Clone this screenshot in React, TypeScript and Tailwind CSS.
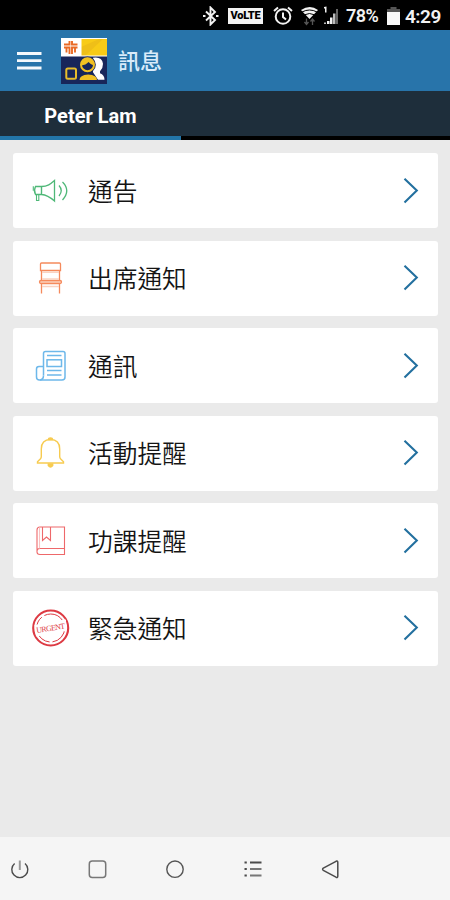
import type { ReactNode } from "react"

interface MessageItem {
  id: string
  label: string
  icon: ReactNode
}

function HornIcon() {
  return (
    <svg viewBox="0 0 40 40" className="size-10" fill="none" stroke="#4fb878" strokeWidth="1.3">
      <path d="M11.500 15.500H5.500q-2 4 0 8h6M11.500 15.500c6 0 9-2.500 13-6V30c-4-3.500-7-6-13-6.500z" />
      <path d="M11.500 15.500v8M3.300 15.300v4.500M6.500 23.500v6h2.300v-6" strokeWidth="1.100" />
      <path d="M29 14.500q4.500 5 0 10.500M32.500 11q8.500 8.500 0 18" />
    </svg>
  )
}

function ChairIcon() {
  return (
    <svg viewBox="0 0 40 40" className="size-10" fill="none" stroke="#f58a5c" strokeWidth="1.300">
      <path d="M10.500 12.500h20V6q0-1-1-1h-18q-1 0-1 1z" />
      <path d="M11.500 12.500V22M29.500 12.500V22" />
      <rect x="9.500" y="22.500" width="22" height="3" rx="1.500" fill="#fbd0bc" />
      <path d="M11.500 25.500v10M29.500 25.500v10" />
      <path d="M12 14.200h17M12 21h17M12 28.500h17" stroke="#fad3c2" strokeWidth="1.500" />
    </svg>
  )
}

function NewsIcon() {
  return (
    <svg viewBox="0 0 40 40" className="size-10" fill="none" stroke="#6db8ea" strokeWidth="1.500">
      <path d="M13.500 29.500v-22q0-2 2-2h17.500q2 0 2 2V31q0 3-3 3H9.500q-3 0-3-3v-8q0-2.500 2.500-2.500h4.500" />
      <path d="M13.500 29.500q0 4-3.500 4.500" />
      <rect x="17" y="13.800" width="14.500" height="6.700" />
      <path d="M17 9.500h14.500M17 24.500h14.500M17 29h14.500" />
    </svg>
  )
}

function BellIcon() {
  return (
    <svg viewBox="0 0 40 40" className="size-10" fill="none" stroke="#f7cb50" strokeWidth="1.400">
      <path d="M7.500 30h26v-1.200l-3-3c-.6-.7-.8-1.300-.8-2.300V16q0-9.300-9.200-9.500-9.200.2-9.200 9.500v7.500c0 1-.2 1.600-.8 2.300l-3 3z" />
      <path d="M18.500 6.500q0-1.500 2-1.500t2 1.500z" fill="#f7cb50" />
      <path d="M18.300 31h4.400v1.500q-2.200 3-4.400 0z" fill="#f7cb50" />
    </svg>
  )
}

function BookIcon() {
  return (
    <svg viewBox="0 0 40 40" className="size-10" fill="none" stroke="#ee686a" strokeWidth="1.100">
      <path d="M34.500 27.500V6H10q-3 0-3 3v22q0 2.500 3 2.500h24.500v-6H10q-3 0-3 2.500" />
      <path d="M9.500 6.500v21" stroke="#f8c3c3" />
      <path d="M12.500 6v13.500l4-3.500 4 3.500V6" />
    </svg>
  )
}

function UrgentIcon() {
  return (
    <svg viewBox="0 0 40 40" className="size-10" fill="none" stroke="#dd3a43">
      <circle cx="20.700" cy="20" r="17.500" strokeWidth="2.100" />
      <circle cx="20.700" cy="20" r="14" strokeWidth="1" strokeDasharray="20 3 17 2 14 3" />
      <path d="M4.500 17L36 11.500V23L6 28.500z" fill="#fff" stroke="none" />
      <text
        x="20.700"
        y="22.800"
        textAnchor="middle"
        textLength="29"
        transform="rotate(-9 20.700 20)"
        className="font-['Liberation_Serif'] text-[8px]"
        fill="#dd3a43"
        stroke="none"
      >
        URGENT
      </text>
    </svg>
  )
}

const items: MessageItem[] = [
  { id: "notice", label: "通告", icon: <HornIcon /> },
  { id: "attendance", label: "出席通知", icon: <ChairIcon /> },
  { id: "newsletter", label: "通訊", icon: <NewsIcon /> },
  { id: "activity", label: "活動提醒", icon: <BellIcon /> },
  { id: "homework", label: "功課提醒", icon: <BookIcon /> },
  { id: "urgent", label: "緊急通知", icon: <UrgentIcon /> },
]

function StatusBar() {
  return (
    <div className="flex h-[30px] items-center bg-black pt-[2px] pl-[202px] text-[#f2f2f2]">
      <svg viewBox="0 0 18 20" className="h-5 w-[18px] shrink-0" fill="none" stroke="currentColor" strokeWidth="1.900">
        <path d="M4 5.500l9 8.500-4.500 4.500V1.500L13 6l-9 8.500" />
        <path d="M1 10h2.500M14 10h2.500" strokeWidth="2.200" />
      </svg>
      <div className="ml-2 flex h-4 w-[35px] shrink-0 items-center justify-center bg-[#f2f2f2] font-['Roboto'] text-[11px] font-black tracking-tight text-black">
        VoLTE
      </div>
      <svg viewBox="0 0 20 20" className="ml-[10px] size-5 shrink-0" fill="none" stroke="currentColor" strokeWidth="2">
        <circle cx="10" cy="10.500" r="7.300" />
        <path d="M1 5l4-3.500M19 5l-4-3.500M10 6.500V11l3 2.500" />
      </svg>
      <svg viewBox="0 0 20 20" className="ml-[7px] size-5 shrink-0">
        <path d="M1 4q9-6 17 0l-8.500 9z" fill="currentColor" />
        <path d="M2 6q7.500-4 15 0M5 8.700q4.500-2.400 9 0" stroke="#000" strokeWidth="1" fill="none" />
        <path d="M6.500 12.500v6M4.500 16l2 2.500 2-2.500M12.500 19v-6M10.500 15.500l2-2.500 2 2.500" stroke="#555" strokeWidth="1.300" fill="none" />
      </svg>
      <svg viewBox="0 0 18 20" className="ml-[2px] h-5 w-[18px] shrink-0" fill="currentColor">
        <path d="M2 1l2.500-.5v6H3V2.500H2zM5 15h2.500v3H5zM8 11.500h2.500V18H8z" />
        <path d="M2 16.500h2V18H2zM11 7.500h2.500V18H11z" fill="#bbb" />
        <path d="M14 3h2v15h-2z" fill="#666" />
      </svg>
      <span className="ml-[6px] w-[41px] shrink-0 font-['Roboto'] text-[18px] leading-none font-semibold tracking-[-0.500px]">78%</span>
      <svg viewBox="0 0 13 20" className="h-5 w-[13px] shrink-0">
        <path d="M3.500 1h6v2H13v4H0V3h3.500z" fill="#555" />
        <path d="M0 6h13v13H0z" fill="#f8f8f8" />
      </svg>
      <span className="ml-[5px] shrink-0 font-['Roboto'] text-[19px] leading-none font-semibold tracking-[-0.500px]">4:29</span>
    </div>
  )
}

function AppLogo() {
  return (
    <svg viewBox="0 0 46 46" className="ml-[19px] size-[46px]">
      <path d="M0 0h46v46H0z" fill="#18265a" />
      <path d="M0 0h20v18H0z" fill="#fff" />
      <path d="M20 1h26v17H20z" fill="#f8cb17" />
      <path d="M20 18V9L38 1h4L24 18z" fill="#efbf18" />
      <path d="M20 1v17M0 18h46M0 .5h46" stroke="#fff" strokeWidth="1" />
      <path d="M3 6.500h5.500V3M16.500 6.500H11V3M3 9.500h5.500v6.500M16.500 9.500H11v6.500M5.500 10v4.500M14 10v4.500" stroke="#e96a25" strokeWidth="1.900" fill="none" />
      <path d="M32 19.800q9-1.500 10 6 .2 4-3 7.500v2q4.500 1.500 4.500 6.500H37l-5-7.500z" fill="#fff" />
      <rect x="5.300" y="30.500" width="9.700" height="10.200" rx="1.500" fill="none" stroke="#e8bd2b" strokeWidth="2" />
      <circle cx="26.500" cy="26.700" r="8.300" fill="#18265a" />
      <circle cx="26.500" cy="26.700" r="6.500" fill="#18265a" stroke="#f2c122" strokeWidth="2" />
      <path d="M20 27.500q5-.5 7.500-3.500 2 2.500 5.500 3.500 0-7.500-6.500-7.800-6.500.3-6.500 7.800z" fill="#f2c122" />
      <path d="M18.500 42q0-5 8.700-5.500 8.800.5 8.800 5.500z" fill="#f2c122" />
    </svg>
  )
}

function NavBar() {
  return (
    <nav className="flex h-[63px] items-center gap-[53px] bg-[#f5f5f5] pl-[7px] text-[#4b4b4b]">
      <svg viewBox="0 0 25 24" className="h-6 w-[25px]" fill="none" stroke="currentColor" strokeWidth="1.400">
        <path d="M7.600 6.500a8 8 0 1 0 10.400 0" />
        <path d="M12.800 3.500v9.500" stroke="#999" strokeWidth="2" />
      </svg>
      <svg viewBox="0 0 25 24" className="h-6 w-[25px]" fill="none" stroke="#777" strokeWidth="1.500">
        <rect x="4.300" y="4" width="16.400" height="16.400" rx="3" />
      </svg>
      <svg viewBox="0 0 25 24" className="h-6 w-[25px]" fill="none" stroke="#555" strokeWidth="1.400">
        <circle cx="12" cy="12.200" r="8.200" />
      </svg>
      <svg viewBox="0 0 25 24" className="h-6 w-[25px]" fill="none" stroke="currentColor" strokeWidth="1.800">
        <path d="M3.500 5.500h2.300M9 5.500h11.500M3.500 18.500h2.300M3.500 12h2.300" />
        <path d="M9 12h11.500M9 18.500h11.500" stroke="#777" />
      </svg>
      <svg viewBox="0 0 25 24" className="h-6 w-[25px]" fill="none" stroke="currentColor" strokeWidth="1.500" strokeLinejoin="round">
        <path d="M4.300 11.200L17 4.300q1.800-.8 1.800 1.200V19q0 2-1.800 1.200L4.300 13.300q-1.400-1 0-2.100z" />
      </svg>
    </nav>
  )
}

export default function App() {
  return (
    <div className="flex h-[900px] w-[450px] flex-col overflow-hidden bg-[#eaeaea] font-['Noto_Sans_CJK_TC',sans-serif]">
      <StatusBar />

      <header className="flex h-[61px] items-center bg-[#2874aa] pl-[17px]">
        <svg viewBox="0 0 25 20" className="h-5 w-[25px]" stroke="#f5f9fc" strokeWidth="2.800">
          <path d="M0 2.500h24.500M0 9.700h24.500M0 17h24.500" />
        </svg>
        <AppLogo />
        <h1 className="ml-[11px] pb-[3px] text-[22px] leading-none font-medium text-[#d9ebfa]">訊息</h1>
      </header>

      <div className="flex h-[49px] bg-[#1e2e3b]">
        <div className="flex w-[181px] items-center justify-center border-b-4 border-[#2376a9] pt-[5px] font-['Roboto',sans-serif] text-[20px] font-bold text-white">
          Peter Lam
        </div>
        <div className="flex-1 border-b-4 border-black" />
      </div>

      <main className="flex flex-1 flex-col gap-[12.500px] pt-[13px] pr-3 pl-[13px]">
        {items.map((item) => (
          <button key={item.id} className="flex h-[75px] items-center rounded-[3px] bg-white pr-[19px] pl-[17px]">
            {item.icon}
            <span className="ml-[18px] flex-1 pb-px text-left text-[24.700px] leading-none font-[350] text-[#141414]">{item.label}</span>
            <svg viewBox="0 0 16 28" className="h-7 w-4" fill="none" stroke="#23709f" strokeWidth="2.100">
              <path d="M1.500 1.700L13.800 13.500 1.500 25.500" />
            </svg>
          </button>
        ))}
      </main>

      <NavBar />
    </div>
  )
}
